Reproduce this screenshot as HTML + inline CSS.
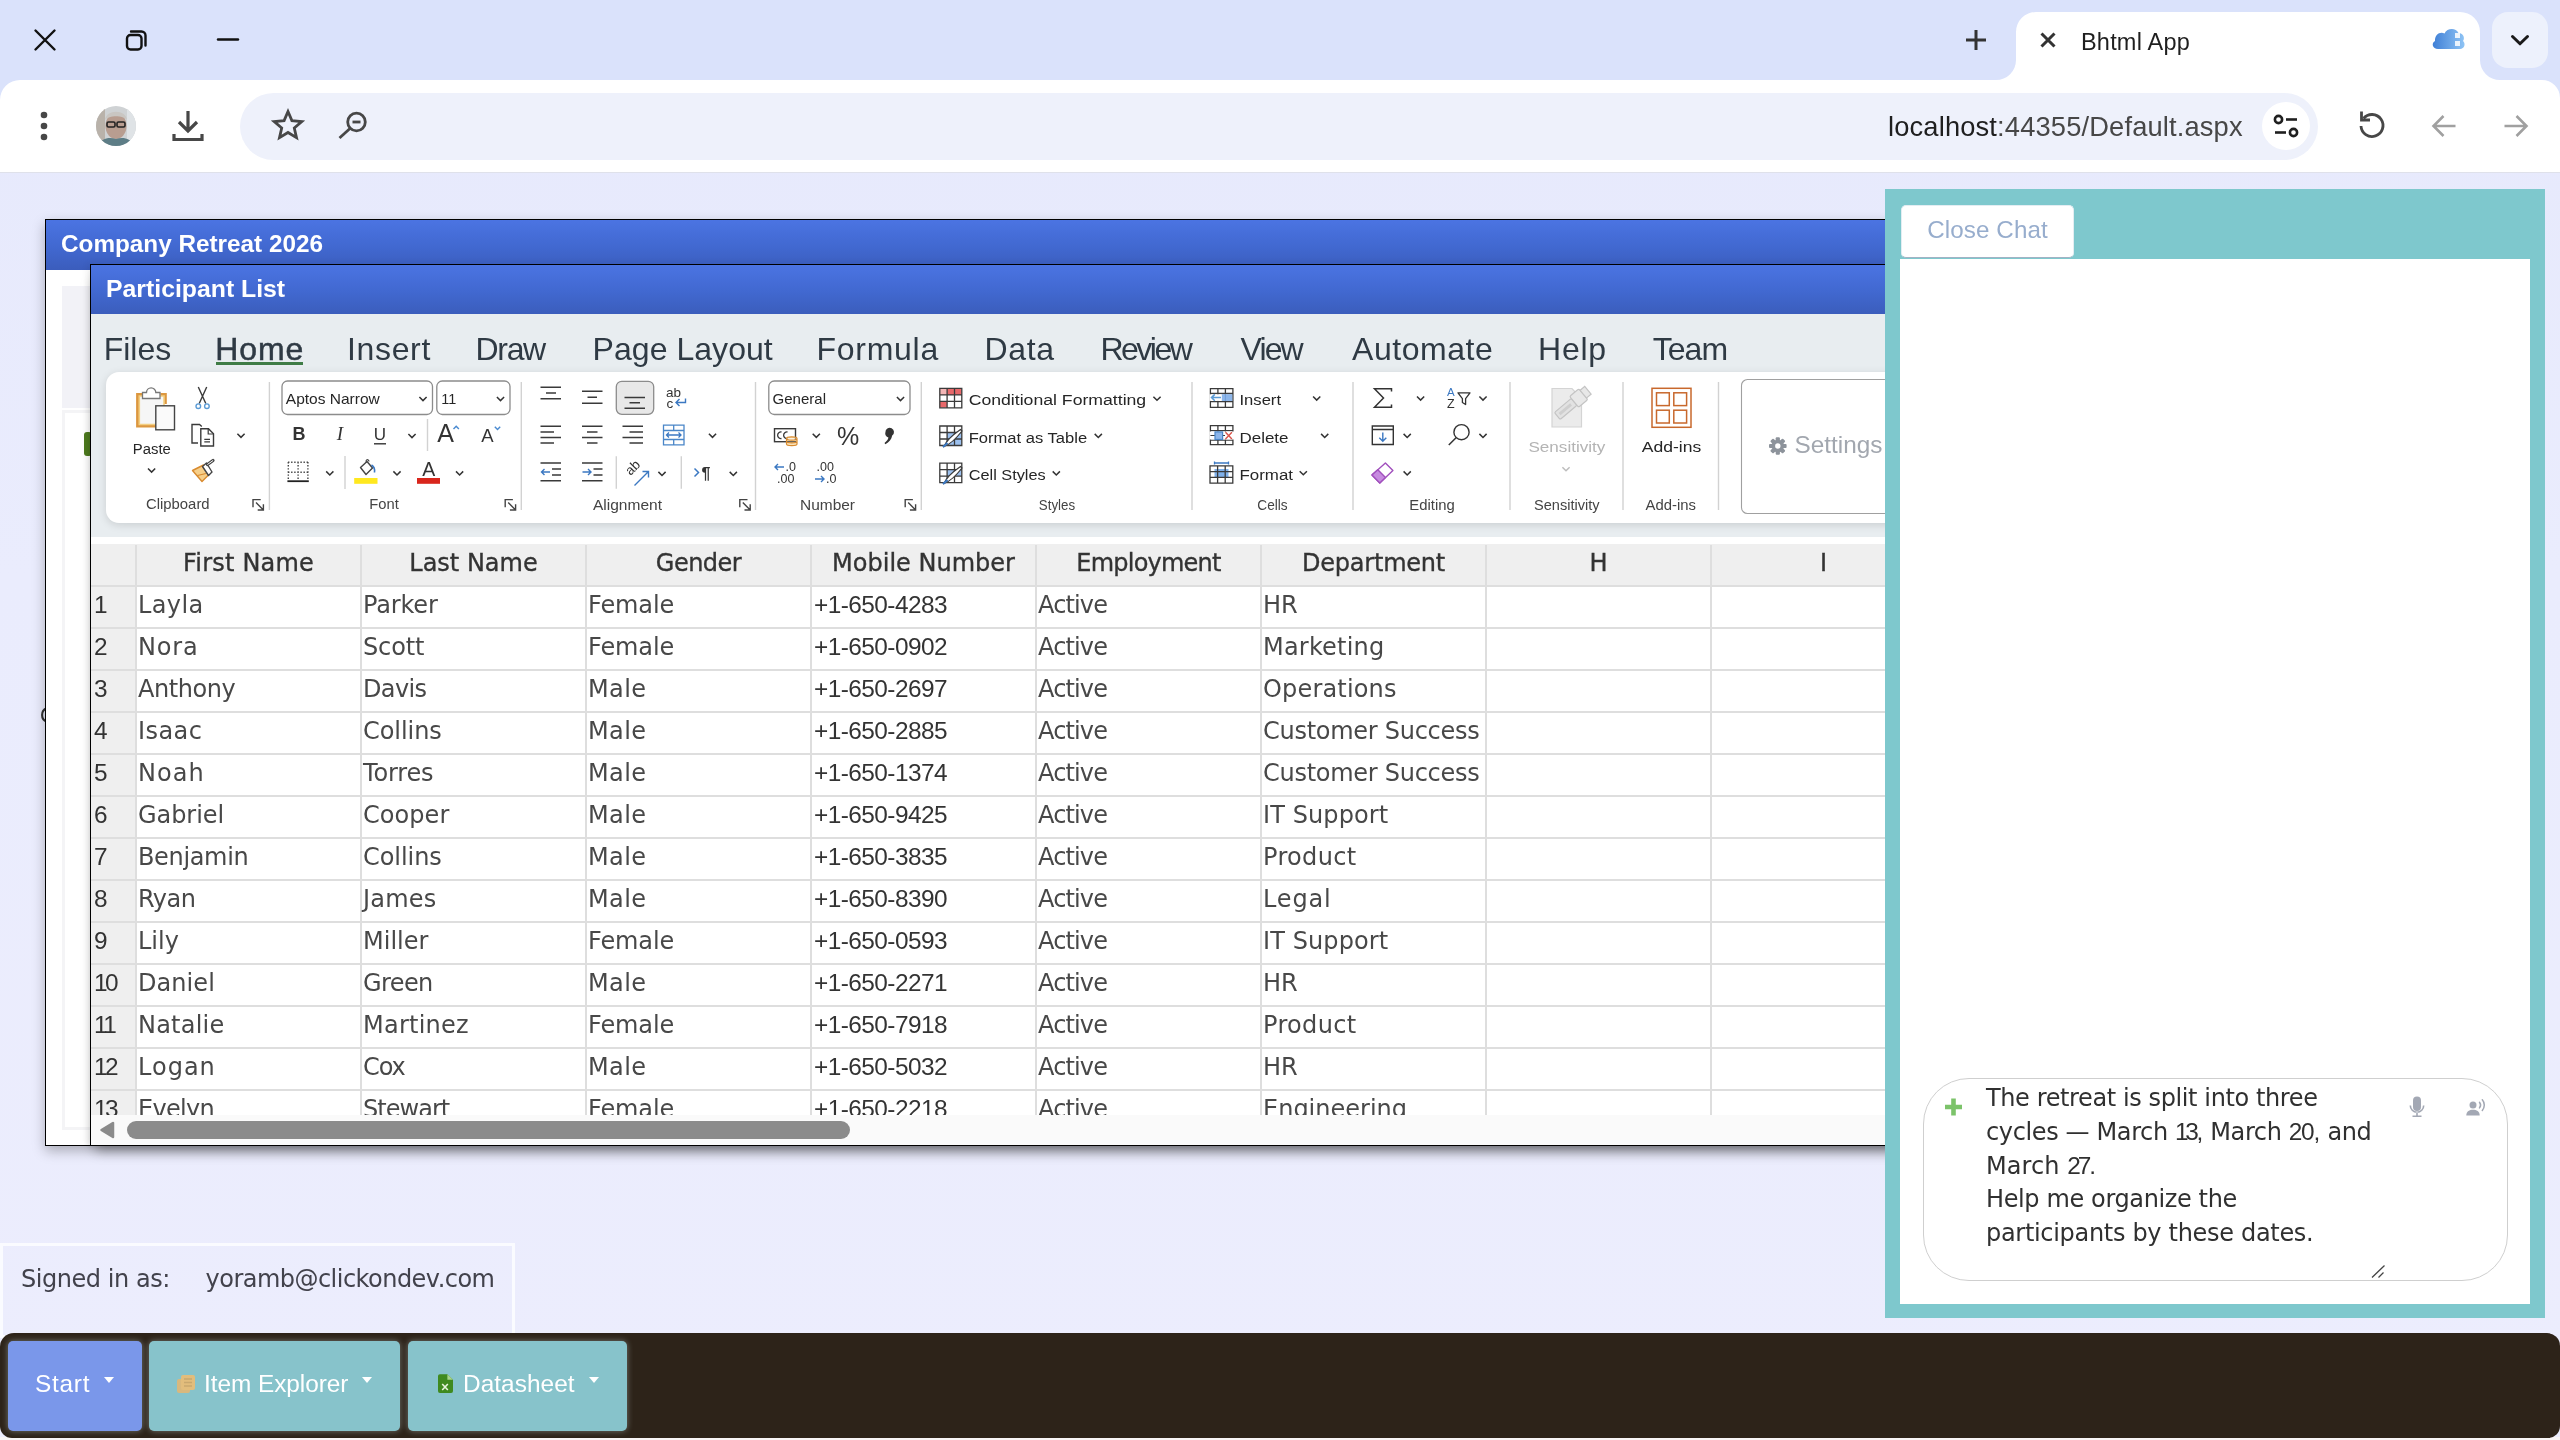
<!DOCTYPE html>
<html lang="en">
<head>
<meta charset="utf-8">
<title>Bhtml App</title>
<style>
*{box-sizing:border-box;margin:0;padding:0}
html,body{width:2560px;height:1440px;overflow:hidden}
body{position:relative;background:#e9ebfc;font-family:"Liberation Sans",sans-serif;color:#222}
.abs{position:absolute}
#win1,#win2,#chat,#signed,#taskbar,#tabtitle,#url{will-change:transform}
.ui{font-family:"Liberation Sans",sans-serif}
svg{position:absolute;overflow:visible}
/* ---------- browser chrome ---------- */
#tabstrip{left:0;top:0;width:2560px;height:173px;background:#dae2fb}
#chromeshape{left:0;top:0;width:2560px;height:173px}
#omni{left:240px;top:93px;width:2078px;height:67px;border-radius:33.5px;background:#eef1fb}
#url{right:317px;top:108px;font-size:27.3px;line-height:38px;color:#1f1f1f;letter-spacing:.15px;white-space:nowrap}
#url span{color:#474747}
#tabtitle{left:2081px;top:25px;font-size:23.5px;line-height:34px;color:#1f1f1f;white-space:nowrap;letter-spacing:.2px}
#tabsearch{left:2492px;top:12px;width:56px;height:56px;border-radius:16px;background:#edf1fc}
#sitechip{left:2262px;top:102px;width:48px;height:48px;border-radius:24px;background:#fff}
#avatar{left:96px;top:106px;width:40px;height:40px;border-radius:20px;background:radial-gradient(circle at 50% 42%,#c9b8ae 0 30%,#9a948f 31% 55%,#cfd3d6 56%);overflow:hidden}
#chromeline{left:0;top:172px;width:2560px;height:1px;background:#dfe1ea}

/* ---------- windows ---------- */
.win{border:1px solid #000;background:#fff;overflow:hidden}
.tbar{left:0;top:0;right:0;color:#fff;font-weight:700;white-space:nowrap;background:linear-gradient(180deg,#4b74e2 0,#4168d0 55%,#3b5dbc 100%)}
#win1{left:45px;top:219px;width:1900px;height:927px;box-shadow:0 5px 12px rgba(0,0,0,.28)}
#win1 .tbar{height:50px;font-size:24.3px;line-height:47px;padding-left:15px}
#win2{left:90px;top:264px;width:1900px;height:882px;box-shadow:0 9px 12px -5px rgba(0,0,0,.4),-2px 0 7px rgba(0,0,0,.08)}
#win2 .tbar{height:49px;font-size:24.8px;line-height:48px;padding-left:15px}
#rbg{left:0;top:49px;right:0;height:223px;background:#e8edf0}
#tabs{left:0;top:49px;height:58px;white-space:nowrap;font-size:32px;line-height:71px;color:#2f3a44}
#tabs span{position:absolute;top:0}
#homeul{left:125px;top:97px;width:87px;height:3px;background:#3f7c46}
#ribbon{left:15px;top:107px;width:1900px;height:151px;background:#fff;border-radius:13px;box-shadow:0 2px 8px rgba(0,0,0,.13)}
/* ---------- grid ---------- */
#grid{left:0;top:272px;width:1900px;height:580px;background:#fff;overflow:hidden;font-family:"DejaVu Sans","Liberation Sans",sans-serif;font-size:24px;color:#484848}
#ghead{left:0;top:7px;width:1900px;height:42px;background:#efefef}
#gside{left:0;top:7px;width:45px;height:572px;background:#efefef}
.hl{position:absolute;left:0;width:1900px;height:2px;background:#dedede}
.vl{position:absolute;top:8px;width:2px;height:572px;background:#dedede}
.c{position:absolute;white-space:nowrap;line-height:42px;height:42px;margin-top:-3px}
.h{position:absolute;white-space:nowrap;line-height:42px;height:42px;width:225px;text-align:center;color:#333;-webkit-text-stroke:.35px #333;margin-top:-3.5px}
.n{font-family:"Liberation Sans",sans-serif;font-size:24.4px;letter-spacing:-.55px;color:#333}
.rn{font-family:"Liberation Sans",sans-serif;font-size:24.4px;letter-spacing:-1.6px;color:#333}
#hscroll{left:0;top:850px;width:1900px;height:30px;background:#fafafa}
#hthumb{left:36px;top:6px;width:723px;height:18px;border-radius:9px;background:#8b8b8b}

/* ---------- chat ---------- */
#chat{left:1885px;top:189px;width:660px;height:1129px;background:#7ec8cd}
#chatbody{left:15px;top:70px;width:630px;height:1045px;background:#fff}
#closechat{left:16px;top:16px;width:173px;height:53px;background:#fff;border-radius:5px;border:1px solid #e3edf2;border-bottom:1px solid #a3b2c4;color:#97adcd;font-size:24.2px;line-height:48px;text-align:center;white-space:nowrap;letter-spacing:.1px}
#chatin{left:38px;top:889px;width:585px;height:203px;border:1px solid #cfcfcf;border-radius:46px;background:#fff}
#chattext{left:101px;top:893px;font-family:"DejaVu Sans","Liberation Sans",sans-serif;font-size:24px;line-height:33.75px;color:#303030;white-space:nowrap}
#chattext div{height:33.75px}
#chattext b{font-weight:400;line-height:1;font-family:"Liberation Sans",sans-serif;font-size:24.4px}
/* ---------- bottom ---------- */
#signed{left:0;top:1243px;width:515px;height:95px;border:3px solid #fafbff;font-family:"DejaVu Sans","Liberation Sans",sans-serif;font-size:24px;line-height:40px;color:#42424c;white-space:nowrap}
#signed span{position:absolute;top:13px}
#taskbar{left:0;top:1333px;width:2560px;height:104.5px;background:#2d2319;border-radius:14px 13px 12px 12px}
.tb{position:absolute;top:8px;height:90px;border-radius:5px;color:#fff;font-size:24.4px;line-height:86px;white-space:nowrap;letter-spacing:.3px;box-shadow:0 0 6px rgba(215,235,235,.42)}
.tb span{position:absolute;top:0}
.tb i{position:absolute;top:35.5px;width:0;height:0;border-left:5.5px solid transparent;border-right:5.5px solid transparent;border-top:6px solid #fff}
/* ---------- page ---------- */
#page{left:0;top:0;width:2560px;height:1440px;background:linear-gradient(180deg,#e6e9fc 0,#eaecfd 40%,#ecedfd 100%);overflow:hidden}
</style>
</head>
<body>
<div class="abs" id="page">
<svg viewBox="0 0 10 20" style="left:38px;top:705px;width:10px;height:20px"><path d="M8.500 3.300A7.300 7.300 0 0 0 8.500 16.700" fill="none" stroke="#333" stroke-width="2.1"/></svg>
<div class="abs win" id="win1"><div class="abs tbar">Company Retreat 2026</div>
<div class="abs" style="left:16px;top:66px;width:40px;height:122px;background:#f2f2f7"></div>
<div class="abs" style="left:16px;top:190px;width:40px;height:720px;border:3px solid #f4f4f6;border-right:0"></div>
<div class="abs" style="left:38px;top:212px;width:8px;height:24px;border-radius:3px;background:#4d7a1e"></div>
</div>
<div class="abs win" id="win2"><div class="abs tbar">Participant List</div>
<div class="abs" id="rbg"></div>
<div class="abs" id="tabs"><span style="left:12.8px;letter-spacing:-0.04px">Files</span><span style="left:124.3px;letter-spacing:0.85px;-webkit-text-stroke:.5px #2f3a44">Home</span><span style="left:256.1px;letter-spacing:0.63px">Insert</span><span style="left:384.5px;letter-spacing:-1.32px">Draw</span><span style="left:501.6px;letter-spacing:0.04px">Page Layout</span><span style="left:725.5px;letter-spacing:0.72px">Formula</span><span style="left:893.4px;letter-spacing:0.67px">Data</span><span style="left:1009.4px;letter-spacing:-2.48px">Review</span><span style="left:1149.6px;letter-spacing:-1.89px">View</span><span style="left:1261.0px;letter-spacing:0.55px">Automate</span><span style="left:1447.1px;letter-spacing:0.69px">Help</span><span style="left:1561.7px;letter-spacing:-0.93px">Team</span></div>
<div class="abs" id="homeul"></div>
<div class="abs" id="ribbon"><!--RB0--><svg viewBox="106 372 1900 151" style="left:0;top:0;width:1900px;height:151px" font-family="Liberation Sans,sans-serif" fill="none"><path d="M142 394.500H137.700V426H156" fill="none" stroke="#dc973f" stroke-width="3.2"/><path d="M160.500 394.500H165.200V404" fill="none" stroke="#dc973f" stroke-width="3.2"/><path d="M139.300 396H164V424.500H139.300Z" fill="#f6f6f6" stroke="#f3cf82" stroke-width="1.6"/><path d="M142.500 398.500V392.500H146.500A4.600 4.600 0 0 1 155.800 392.500H160V398.500Z" fill="#fff" stroke="#777" stroke-width="1.3"/><rect x="155.800" y="405.800" width="18.700" height="24" fill="#fafafa" stroke="#444" stroke-width="1.4"/><text x="132.8" y="453.7" font-size="15.3" fill="#262626" text-anchor="start" textLength="38" lengthAdjust="spacingAndGlyphs">Paste</text><path d="M148.0 468.5L151.6 472.1L155.2 468.5" stroke="#333" stroke-width="1.5" fill="none"/><path d="M198.300 387L205.800 403.500M206.700 387L199.200 403.500" stroke="#3a3a3a" stroke-width="1.4" fill="none"/><circle cx="198.300" cy="406.200" r="2.300" fill="#fff" stroke="#5b9bd5" stroke-width="1.4"/><circle cx="206.900" cy="406.200" r="2.300" fill="#fff" stroke="#5b9bd5" stroke-width="1.4"/><path d="M198 443H192V424.500H199.500L201.800 426.500" fill="none" stroke="#3a3a3a" stroke-width="1.4"/><path d="M200.800 428.800H208.500L213.500 433.800V446H200.800Z" fill="#fff" stroke="#3a3a3a" stroke-width="1.4"/><path d="M208.200 429V434H213.200M204.300 439.300H210M204.300 441.800H210" fill="none" stroke="#3a3a3a" stroke-width="1.2"/><path d="M237.4 433.8L241.0 437.4L244.6 433.8" stroke="#333" stroke-width="1.5" fill="none"/><path d="M192.500 470.500L203.500 465L209 474.500L202 481.500Z" fill="#f6cf8a" stroke="#d88a2e" stroke-width="1.4" stroke-linejoin="round"/><path d="M197.500 475.500L206 473.500" stroke="#d88a2e" stroke-width="1.2"/><path d="M202.500 466.500L206.500 463L212 472L208.500 475.500Z" fill="#fff" stroke="#444" stroke-width="1.4" stroke-linejoin="round"/><path d="M207.500 464.500L213 460.500" stroke="#444" stroke-width="3.200" stroke-linecap="round"/><path d="M207.800 464.300L212.800 460.700" stroke="#fff" stroke-width="1" stroke-linecap="round"/><text x="146" y="509.2" font-size="14.6" fill="#444" text-anchor="start" textLength="63.6" lengthAdjust="spacingAndGlyphs">Clipboard</text><path d="M253.0 507.3V499.6H260.7M256.0 502.6L263.2 509.8M263.4 504.3V510.0H257.7" stroke="#444" stroke-width="1.4" fill="none"/><path d="M269.4 382V510" stroke="#d2d2d2" stroke-width="1.4"/><rect x="282" y="381" width="150.5" height="33.5" rx="5.5" fill="#fff" stroke="#8c8c8c" stroke-width="1.3"/><text x="285.8" y="403.5" font-size="15" fill="#262626" text-anchor="start" textLength="94" lengthAdjust="spacingAndGlyphs">Aptos Narrow</text><path d="M419.4 397.0L423.0 400.6L426.6 397.0" stroke="#333" stroke-width="1.5" fill="none"/><rect x="436.8" y="381" width="73.19999999999999" height="33.5" rx="5.5" fill="#fff" stroke="#8c8c8c" stroke-width="1.3"/><text x="441.3" y="403.5" font-size="15" fill="#262626" text-anchor="start" textLength="15" lengthAdjust="spacingAndGlyphs">11</text><path d="M496.9 397.0L500.5 400.6L504.1 397.0" stroke="#333" stroke-width="1.5" fill="none"/><text x="299" y="440.3" font-size="18" fill="#333" text-anchor="middle" font-weight="700">B</text><text x="340" y="440.3" font-size="19" fill="#333" text-anchor="middle" font-style="italic" font-family="Liberation Serif,serif">I</text><text x="380" y="440" font-size="17" fill="#333" text-anchor="middle">U</text><path d="M374 443.800H386" stroke="#333" stroke-width="1.4"/><path d="M408.4 434.0L412.0 437.6L415.6 434.0" stroke="#333" stroke-width="1.5" fill="none"/><path d="M427.5 419V451" stroke="#d2d2d2" stroke-width="1.4"/><text x="445.5" y="442" font-size="25" fill="#333" text-anchor="middle">A</text><path d="M453.500 429L456.200 426.200L458.900 429" stroke="#4a8ad0" stroke-width="1.4" fill="none"/><text x="487.5" y="442" font-size="18.5" fill="#333" text-anchor="middle">A</text><path d="M494.800 426.800L497.500 429.600L500.200 426.800" stroke="#4a8ad0" stroke-width="1.4" fill="none"/><path d="M288 462.300H308.200M288 472.300H308.200M288.300 462V479.500M298.100 462V479.500M307.900 462V479.500" stroke="#444" stroke-width="1.4" stroke-dasharray="1.4 1.7" fill="none"/><path d="M287.400 481.200H308.800" stroke="#222" stroke-width="1.800"/><path d="M326.2 471.4L329.8 475.0L333.4 471.4" stroke="#333" stroke-width="1.5" fill="none"/><path d="M345 456V489" stroke="#d2d2d2" stroke-width="1.4"/><path d="M360.500 467.500L367 461.500L372.500 468L366 474.500Z" fill="#fff" stroke="#444" stroke-width="1.4" stroke-linejoin="round"/><path d="M366.500 462.500C365 459.500 368.500 458.500 369 461.500" fill="none" stroke="#444" stroke-width="1.200"/><path d="M371.500 465C374 466.500 375 469 374.500 472.500" fill="none" stroke="#3b78c2" stroke-width="1.600"/><rect x="354.200" y="478" width="23.300" height="5.800" fill="#ffe81f"/><path d="M393.4 471.4L397.0 475.0L400.6 471.4" stroke="#333" stroke-width="1.5" fill="none"/><text x="428.7" y="476" font-size="19.5" fill="#333" text-anchor="middle">A</text><rect x="417" y="478" width="23" height="5.800" fill="#d9261c"/><path d="M456.0 471.4L459.6 475.0L463.2 471.4" stroke="#333" stroke-width="1.5" fill="none"/><text x="369.3" y="509.2" font-size="14.6" fill="#444" text-anchor="start" textLength="29.5" lengthAdjust="spacingAndGlyphs">Font</text><path d="M505.2 507.3V499.6H512.9M508.2 502.6L515.4 509.8M515.6 504.3V510.0H509.9" stroke="#444" stroke-width="1.4" fill="none"/><path d="M521.3 382V510" stroke="#d2d2d2" stroke-width="1.4"/><path d="M540.5 387.2H561M546 393H556M540.5 398.8H561" stroke="#3a3a3a" stroke-width="1.5" fill="none"/><path d="M582 391.3H602.5M587.5 397.3H597M582 403.2H602.5" stroke="#3a3a3a" stroke-width="1.5" fill="none"/><rect x="616.300" y="381.300" width="37.400" height="33" rx="5.500" fill="#e8e8e8" stroke="#8c8c8c" stroke-width="1.3"/><path d="M624.5 397.4H645M629.5 402.8H640M624.5 408.2H645" stroke="#3a3a3a" stroke-width="1.5" fill="none"/><text x="666" y="397" font-size="13.5" fill="#333" text-anchor="start">ab</text><text x="666.5" y="407.5" font-size="13.5" fill="#333" text-anchor="start">c</text><path d="M685.500 398.500V402.500H676M679.500 399L676 402.500L679.500 406" stroke="#3b78c2" stroke-width="1.400" fill="none"/><path d="M540.5 426.3H561M540.5 431.9H554M540.5 437.5H561M540.5 443.1H554" stroke="#3a3a3a" stroke-width="1.5" fill="none"/><path d="M582 426.3H602.5M587 431.9H597.5M582 437.5H602.5M587 443.1H597.5" stroke="#3a3a3a" stroke-width="1.5" fill="none"/><path d="M622.5 426.3H643M629.5 431.9H643M622.5 437.5H643M629.5 443.1H643" stroke="#3a3a3a" stroke-width="1.5" fill="none"/><path d="M663.500 425.200H684V444.800H663.500ZM663.500 430.500H684M663.500 439.500H684M673.700 425.200V430.500M673.700 439.500V444.800" fill="#fff" stroke="#4a86c8" stroke-width="1.3"/><path d="M666.500 435H681M669 432.500L666.500 435L669 437.500M678.500 432.500L681 435L678.500 437.500" stroke="#3b78c2" stroke-width="1.300" fill="none"/><path d="M708.9 433.8L712.5 437.4L716.1 433.8" stroke="#333" stroke-width="1.5" fill="none"/><path d="M540.5 463H561M552 469.1H561M552 475H561M540.5 480.7H561" stroke="#3a3a3a" stroke-width="1.5" fill="none"/><path d="M541.500 472H550M544.500 469L541.500 472L544.500 475" stroke="#3b78c2" stroke-width="1.400" fill="none"/><path d="M582 463H602.5M593.5 469.1H602.5M593.5 475H602.5M582 480.7H602.5" stroke="#3a3a3a" stroke-width="1.5" fill="none"/><path d="M582.500 472H591M588 469L591 472L588 475" stroke="#3b78c2" stroke-width="1.400" fill="none"/><path d="M616.3 456.3V488.8" stroke="#d2d2d2" stroke-width="1.4"/><text x="0" y="0" font-size="13.500" fill="#333" transform="translate(630.500 476) rotate(-45)">ab</text><path d="M634.500 485.500L648 472M642.500 471.500H648.500V477.500" stroke="#3b78c2" stroke-width="1.400" fill="none"/><path d="M658.4 471.9L662.0 475.5L665.6 471.9" stroke="#333" stroke-width="1.5" fill="none"/><path d="M681.3 456.3V488.8" stroke="#d2d2d2" stroke-width="1.4"/><path d="M694.500 468.500L698.500 472.500L694.500 476.500" stroke="#3b78c2" stroke-width="1.500" fill="none"/><text x="706" y="479" font-size="16" fill="#333" text-anchor="middle" font-weight="700">¶</text><path d="M729.7 471.9L733.3 475.5L736.9 471.9" stroke="#333" stroke-width="1.5" fill="none"/><text x="593" y="509.5" font-size="14.6" fill="#444" text-anchor="start" textLength="69" lengthAdjust="spacingAndGlyphs">Alignment</text><path d="M739.8 507.3V499.6H747.5M742.8 502.6L750 509.8M750.2 504.3V510.0H744.5" stroke="#444" stroke-width="1.4" fill="none"/><path d="M755.5 382V510" stroke="#d2d2d2" stroke-width="1.4"/><rect x="768.8" y="381" width="141.20000000000005" height="33.5" rx="5.5" fill="#fff" stroke="#8c8c8c" stroke-width="1.3"/><text x="772.5" y="403.5" font-size="15" fill="#262626" text-anchor="start" textLength="53.5" lengthAdjust="spacingAndGlyphs">General</text><path d="M896.9 397.0L900.5 400.6L904.1 397.0" stroke="#333" stroke-width="1.5" fill="none"/><rect x="774.500" y="428.700" width="21" height="13" fill="#fff" stroke="#3a3a3a" stroke-width="1.4"/><path d="M781.500 432a3.300 3.300 0 1 0 0 6.500M787.500 432a3.300 3.300 0 1 0 0 6.500" stroke="#3a3a3a" stroke-width="1.3" fill="none"/><path d="M786.500 438.500c0-2.200 10.500-2.200 10.500 0v5.500c0 2.200-10.500 2.200-10.500 0zM786.500 438.500c0 2.200 10.500 2.200 10.500 0M786.500 441.300c0 2.200 10.500 2.200 10.500 0" fill="#fbe3b8" stroke="#d88a2e" stroke-width="1.200"/><path d="M812.7 433.8L816.3 437.4L819.9 433.8" stroke="#333" stroke-width="1.5" fill="none"/><text x="848.2" y="444.5" font-size="25" fill="#333" text-anchor="middle">%</text><path d="M885.400 432.200a4.300 4.300 0 1 1 6.800 3.400c-.700 3.700-3 6.700-6.800 8.600l-.900-1.300c2.400-1.600 3.600-3.300 3.900-5.300a4.300 4.300 0 0 1-3-5.400z" fill="#333"/><path d="M775 467H784M778 464L775 467L778 470" stroke="#3b78c2" stroke-width="1.400" fill="none"/><text x="785.5" y="471" font-size="12.5" fill="#333" text-anchor="start">.0</text><text x="777" y="483.3" font-size="12.5" fill="#333" text-anchor="start">.00</text><text x="816.5" y="471" font-size="12.5" fill="#333" text-anchor="start">.00</text><path d="M815 479H824M821 476L824 479L821 482" stroke="#3b78c2" stroke-width="1.400" fill="none"/><text x="826" y="483.3" font-size="12.5" fill="#333" text-anchor="start">.0</text><text x="800" y="509.5" font-size="14.6" fill="#444" text-anchor="start" textLength="55" lengthAdjust="spacingAndGlyphs">Number</text><path d="M905.1999999999999 507.3V499.6H912.9M908.1999999999999 502.6L915.4 509.8M915.6 504.3V510.0H909.9" stroke="#444" stroke-width="1.4" fill="none"/><path d="M921.3 382V510" stroke="#d2d2d2" stroke-width="1.4"/><path d="M947 388.500h14.500v6.500h-14.500zM939.800 401h7.300v6.500h-7.300z" fill="#e8686a"/><path d="M939.800 388.500h7.300v6.500h-7.300z" fill="#f3b5b5"/><path d="M939.8 388.3h22v19.5h-22zM939.8 394.8h22M939.8 401.3h22M947.1 388.3v19.5M954.5 388.3v19.5" fill="none" stroke="#3a3a3a" stroke-width="1.300"/><text x="968.7" y="405" font-size="15.3" fill="#262626" text-anchor="start" textLength="177.5" lengthAdjust="spacingAndGlyphs">Conditional Formatting</text><path d="M1153.4 396.7L1157.0 400.3L1160.6 396.7" stroke="#333" stroke-width="1.5" fill="none"/><path d="M947 432.500h14.500v13h-14.500z" fill="#9cc0ee"/><path d="M939.8 426h22v19.5h-22zM939.8 432.5h22M939.8 439.0h22M947.1 426v19.5M954.5 426v19.5" fill="none" stroke="#3a3a3a" stroke-width="1.300"/><path d="M944 446.500C946 441 954 434 960.500 429.500L962 431C957 437.500 951 444 944 446.500Z" fill="#fff" stroke="#3a3a3a" stroke-width="1.200"/><path d="M943 447L947.500 443" stroke="#3b78c2" stroke-width="2.200"/><text x="968.7" y="442.5" font-size="15.3" fill="#262626" text-anchor="start" textLength="118.5" lengthAdjust="spacingAndGlyphs">Format as Table</text><path d="M1094.7 433.9L1098.3 437.5L1101.9 433.9" stroke="#333" stroke-width="1.5" fill="none"/><path d="M947 469.500h14.500v6.500h-14.500z" fill="#9cc0ee"/><path d="M939.8 463.2h22v19.5h-22zM939.8 469.7h22M939.8 476.2h22M947.1 463.2v19.5M954.5 463.2v19.5" fill="none" stroke="#3a3a3a" stroke-width="1.300"/><path d="M944 483.500C946 478 954 471 960.500 466.500L962 468C957 474.500 951 481 944 483.500Z" fill="#fff" stroke="#3a3a3a" stroke-width="1.200"/><path d="M943 484L947.500 480" stroke="#3b78c2" stroke-width="2.200"/><text x="968.7" y="480" font-size="15.3" fill="#262626" text-anchor="start" textLength="77" lengthAdjust="spacingAndGlyphs">Cell Styles</text><path d="M1052.7 471.4L1056.3 475.0L1059.9 471.4" stroke="#333" stroke-width="1.5" fill="none"/><text x="1038.8" y="509.5" font-size="14.6" fill="#444" text-anchor="start" textLength="36.3" lengthAdjust="spacingAndGlyphs">Styles</text><path d="M1192 382V510" stroke="#d2d2d2" stroke-width="1.4"/><path d="M1210.400 388.700h22.500v18.700h-22.500zM1210.400 393.500h22.500M1210.400 401.600h22.500M1217.900 388.700v18.700M1225.400 388.700v18.700" fill="none" stroke="#3a3a3a" stroke-width="1.300"/><rect x="1209.500" y="394.300" width="12.300" height="6.600" fill="#fff"/><rect x="1221.800" y="394.200" width="10.500" height="6.800" fill="#8db6ea"/><path d="M1225.400 394.200v6.800" stroke="#6f9fda" stroke-width="1"/><path d="M1211.500 397.600h9.500M1214.800 394.400l-3.300 3.200l3.300 3.200" stroke="#5b9bd5" stroke-width="1.500" fill="none"/><text x="1239.5" y="405" font-size="15.3" fill="#262626" text-anchor="start" textLength="41.5" lengthAdjust="spacingAndGlyphs">Insert</text><path d="M1313.1 396.5L1316.7 400.1L1320.3 396.5" stroke="#333" stroke-width="1.5" fill="none"/><path d="M1210.400 425.700h22.500v19h-22.500zM1210.400 430.700h22.500M1210.400 440.200h22.500M1217.900 425.700v19M1225.400 425.700v19" fill="none" stroke="#3a3a3a" stroke-width="1.300"/><rect x="1209.500" y="431.500" width="24.500" height="8" fill="#fff"/><path d="M1210.400 435.500h5M1222.500 435.500h2.500" stroke="#3a3a3a" stroke-width="1.200"/><rect x="1215" y="431.900" width="7.600" height="7.600" fill="#8db6ea" stroke="#4a86c8" stroke-width="1.200"/><path d="M1225.500 432.300l6.400 6.800M1231.900 432.300l-6.400 6.800" stroke="#d9534a" stroke-width="1.400"/><text x="1239.5" y="442.5" font-size="15.3" fill="#262626" text-anchor="start" textLength="49" lengthAdjust="spacingAndGlyphs">Delete</text><path d="M1321.1 433.9L1324.7 437.5L1328.3 433.9" stroke="#333" stroke-width="1.5" fill="none"/><path d="M1214.500 469h14v8.500h-14z" fill="#7fb0ea"/><path d="M1210 465.8h22.8v17.4h-22.8zM1210 471.6h22.8M1210 477.4h22.8M1217.6 465.8v17.4M1225.2 465.8v17.4" fill="none" stroke="#3a3a3a" stroke-width="1.300"/><path d="M1214.500 463h14M1214.500 461.500v3M1228.500 461.500v3" stroke="#3b78c2" stroke-width="1.300" fill="none"/><text x="1239.5" y="480.2" font-size="15.3" fill="#262626" text-anchor="start" textLength="53.5" lengthAdjust="spacingAndGlyphs">Format</text><path d="M1299.7 471.2L1303.3 474.8L1306.9 471.2" stroke="#333" stroke-width="1.5" fill="none"/><text x="1257.3" y="509.5" font-size="14.6" fill="#444" text-anchor="start" textLength="30.3" lengthAdjust="spacingAndGlyphs">Cells</text><path d="M1353 382V510" stroke="#d2d2d2" stroke-width="1.4"/><path d="M1391.500 391.500V388.800H1374.500L1383.500 398L1374.500 407.200H1391.500V404.500" fill="none" stroke="#333" stroke-width="1.500"/><path d="M1417.0 396.5L1420.6 400.1L1424.2 396.5" stroke="#333" stroke-width="1.5" fill="none"/><text x="1447" y="395.5" font-size="11.5" fill="#3b78c2" text-anchor="start">A</text><text x="1447" y="408" font-size="12.5" fill="#333" text-anchor="start">Z</text><path d="M1458 392.800H1470L1465.600 398.600V404.500L1462.400 402.500V398.600Z" fill="#fff" stroke="#333" stroke-width="1.300" stroke-linejoin="round"/><path d="M1479.4 396.5L1483.0 400.1L1486.6 396.5" stroke="#333" stroke-width="1.5" fill="none"/><path d="M1372.300 426h21v18.500h-21zM1372.300 429.500h21" fill="#fff" stroke="#333" stroke-width="1.400"/><path d="M1382.800 432.500v8.500M1379.300 437.800l3.500 3.500l3.500-3.500" stroke="#3b78c2" stroke-width="1.400" fill="none"/><path d="M1403.6 433.9L1407.2 437.5L1410.8 433.9" stroke="#333" stroke-width="1.5" fill="none"/><circle cx="1461.500" cy="432.200" r="7.600" fill="none" stroke="#333" stroke-width="1.400"/><path d="M1456 437.800L1448.800 445" stroke="#333" stroke-width="1.500"/><path d="M1479.4 433.9L1483.0 437.5L1486.6 433.9" stroke="#333" stroke-width="1.5" fill="none"/><path d="M1372 474.900L1385.400 463L1392.900 470.500L1379.800 483Z" fill="#fff" stroke="#a150bd" stroke-width="1.400" stroke-linejoin="round"/><path d="M1372 474.900L1377.800 469.800L1385.500 477.600L1379.800 483Z" fill="#c78be0" stroke="#a150bd" stroke-width="1.400" stroke-linejoin="round"/><path d="M1403.6 471.4L1407.2 475.0L1410.8 471.4" stroke="#333" stroke-width="1.5" fill="none"/><text x="1409.3" y="509.5" font-size="14.6" fill="#444" text-anchor="start" textLength="45.4" lengthAdjust="spacingAndGlyphs">Editing</text><path d="M1510 382V510" stroke="#d2d2d2" stroke-width="1.4"/><path d="M1552 388.500H1572L1581.500 399V427H1552Z" fill="#ebebeb" stroke="#d4d4d4" stroke-width="1.200"/><g transform="translate(1568 407) rotate(-40)"><rect x="-14" y="-4.500" width="22" height="9" rx="1.500" fill="#e2e2e2" stroke="#c4c4c4" stroke-width="1.200"/><rect x="-11" y="-1.500" width="15" height="3" fill="#cfcfcf"/><rect x="8" y="-7" width="12" height="14" rx="1.500" fill="#e8e8e8" stroke="#c4c4c4" stroke-width="1.200"/><rect x="20" y="-5" width="6" height="10" fill="#e8e8e8" stroke="#c4c4c4" stroke-width="1.200"/></g><text x="1528.4" y="452" font-size="15.3" fill="#b4b4b4" text-anchor="start" textLength="77" lengthAdjust="spacingAndGlyphs">Sensitivity</text><path d="M1562.4 467.2L1566.0 470.8L1569.6 467.2" stroke="#bdbdbd" stroke-width="1.5" fill="none"/><text x="1534" y="509.5" font-size="14.6" fill="#444" text-anchor="start" textLength="65.6" lengthAdjust="spacingAndGlyphs">Sensitivity</text><path d="M1623 382V510" stroke="#d2d2d2" stroke-width="1.4"/><rect x="1652" y="388.300" width="39" height="39" fill="none" stroke="#c8682c" stroke-width="1.500"/><rect x="1656.5" y="392.8" width="12.800" height="12.800" fill="none" stroke="#c8682c" stroke-width="1.500"/><rect x="1673.8" y="392.8" width="12.800" height="12.800" fill="none" stroke="#c8682c" stroke-width="1.500"/><rect x="1656.5" y="410.2" width="12.800" height="12.800" fill="none" stroke="#c8682c" stroke-width="1.500"/><rect x="1673.8" y="410.2" width="12.800" height="12.800" fill="none" stroke="#c8682c" stroke-width="1.500"/><text x="1641.8" y="452" font-size="15.3" fill="#262626" text-anchor="start" textLength="59.4" lengthAdjust="spacingAndGlyphs">Add-ins</text><text x="1645.6" y="509.5" font-size="14.6" fill="#444" text-anchor="start" textLength="50.4" lengthAdjust="spacingAndGlyphs">Add-ins</text><path d="M1718.5 382V510" stroke="#d2d2d2" stroke-width="1.4"/><rect x="1741.500" y="379.500" width="300" height="134" rx="6" fill="#fff" stroke="#a0a0a0" stroke-width="1.100"/><rect x="-2.100" y="-8.800" width="4.200" height="4.600" rx="1" fill="#8d939b" transform="translate(1777.8 446) rotate(0)"/><rect x="-2.100" y="-8.800" width="4.200" height="4.600" rx="1" fill="#8d939b" transform="translate(1777.8 446) rotate(45)"/><rect x="-2.100" y="-8.800" width="4.200" height="4.600" rx="1" fill="#8d939b" transform="translate(1777.8 446) rotate(90)"/><rect x="-2.100" y="-8.800" width="4.200" height="4.600" rx="1" fill="#8d939b" transform="translate(1777.8 446) rotate(135)"/><rect x="-2.100" y="-8.800" width="4.200" height="4.600" rx="1" fill="#8d939b" transform="translate(1777.8 446) rotate(180)"/><rect x="-2.100" y="-8.800" width="4.200" height="4.600" rx="1" fill="#8d939b" transform="translate(1777.8 446) rotate(225)"/><rect x="-2.100" y="-8.800" width="4.200" height="4.600" rx="1" fill="#8d939b" transform="translate(1777.8 446) rotate(270)"/><rect x="-2.100" y="-8.800" width="4.200" height="4.600" rx="1" fill="#8d939b" transform="translate(1777.8 446) rotate(315)"/><circle cx="1777.800" cy="446" r="6.200" fill="#8d939b"/><circle cx="1777.800" cy="446" r="2.700" fill="#fff"/><text x="1794.5" y="452.8" font-size="24.3" fill="#a2a7af" text-anchor="start" textLength="88" lengthAdjust="spacingAndGlyphs">Settings</text></svg><!--RB1--></div>
<div class="abs" id="grid"><div class="abs" id="ghead"></div><div class="abs" id="gside"></div><div class="hl" style="top:48px"></div><div class="hl" style="top:90px"></div><div class="hl" style="top:132px"></div><div class="hl" style="top:174px"></div><div class="hl" style="top:216px"></div><div class="hl" style="top:258px"></div><div class="hl" style="top:300px"></div><div class="hl" style="top:342px"></div><div class="hl" style="top:384px"></div><div class="hl" style="top:426px"></div><div class="hl" style="top:468px"></div><div class="hl" style="top:510px"></div><div class="hl" style="top:552px"></div><div class="hl" style="top:594px"></div><div class="hl" style="top:636px"></div><div class="vl" style="left:44px"></div><div class="vl" style="left:269px"></div><div class="vl" style="left:494px"></div><div class="vl" style="left:719px"></div><div class="vl" style="left:944px"></div><div class="vl" style="left:1169px"></div><div class="vl" style="left:1394px"></div><div class="vl" style="left:1619px"></div><div class="vl" style="left:1844px"></div><div class="h" style="left:45px;top:8px;letter-spacing:0.2px;padding-left:0.2px">First Name</div><div class="h" style="left:270px;top:8px">Last Name</div><div class="h" style="left:495px;top:8px;letter-spacing:-0.51px;padding-left:-0.51px">Gender</div><div class="h" style="left:720px;top:8px">Mobile Number</div><div class="h" style="left:945px;top:8px;letter-spacing:-0.77px;padding-left:-0.77px">Employment</div><div class="h" style="left:1170px;top:8px;letter-spacing:-0.22px;padding-left:-0.22px">Department</div><div class="h" style="left:1395px;top:8px">H</div><div class="h" style="left:1620px;top:8px">I</div><div class="h" style="left:1845px;top:8px">J</div><div class="c rn" style="left:3px;top:50px">1</div><div class="c" style="left:47px;top:50px;letter-spacing:0.39px">Layla</div><div class="c" style="left:272px;top:50px;letter-spacing:-0.18px">Parker</div><div class="c" style="left:497px;top:50px;letter-spacing:-0.1px">Female</div><div class="c n" style="left:723px;top:50px">+1-650-4283</div><div class="c" style="left:947px;top:50px;letter-spacing:-0.85px">Active</div><div class="c" style="left:1172px;top:50px">HR</div><div class="c rn" style="left:3px;top:92px">2</div><div class="c" style="left:47px;top:92px;letter-spacing:0.8px">Nora</div><div class="c" style="left:272px;top:92px;letter-spacing:-0.13px">Scott</div><div class="c" style="left:497px;top:92px;letter-spacing:-0.1px">Female</div><div class="c n" style="left:723px;top:92px">+1-650-0902</div><div class="c" style="left:947px;top:92px;letter-spacing:-0.85px">Active</div><div class="c" style="left:1172px;top:92px;letter-spacing:0.2px">Marketing</div><div class="c rn" style="left:3px;top:134px">3</div><div class="c" style="left:47px;top:134px;letter-spacing:-0.44px">Anthony</div><div class="c" style="left:272px;top:134px;letter-spacing:-0.64px">Davis</div><div class="c" style="left:497px;top:134px;letter-spacing:0.37px">Male</div><div class="c n" style="left:723px;top:134px">+1-650-2697</div><div class="c" style="left:947px;top:134px;letter-spacing:-0.85px">Active</div><div class="c" style="left:1172px;top:134px;letter-spacing:0.17px">Operations</div><div class="c rn" style="left:3px;top:176px">4</div><div class="c" style="left:47px;top:176px;letter-spacing:0.43px">Isaac</div><div class="c" style="left:272px;top:176px;letter-spacing:-0.06px">Collins</div><div class="c" style="left:497px;top:176px;letter-spacing:0.37px">Male</div><div class="c n" style="left:723px;top:176px">+1-650-2885</div><div class="c" style="left:947px;top:176px;letter-spacing:-0.85px">Active</div><div class="c" style="left:1172px;top:176px;letter-spacing:-0.27px">Customer Success</div><div class="c rn" style="left:3px;top:218px">5</div><div class="c" style="left:47px;top:218px;letter-spacing:1.09px">Noah</div><div class="c" style="left:272px;top:218px;letter-spacing:-0.16px">Torres</div><div class="c" style="left:497px;top:218px;letter-spacing:0.37px">Male</div><div class="c n" style="left:723px;top:218px">+1-650-1374</div><div class="c" style="left:947px;top:218px;letter-spacing:-0.85px">Active</div><div class="c" style="left:1172px;top:218px;letter-spacing:-0.27px">Customer Success</div><div class="c rn" style="left:3px;top:260px">6</div><div class="c" style="left:47px;top:260px;letter-spacing:-0.06px">Gabriel</div><div class="c" style="left:272px;top:260px;letter-spacing:0.06px">Cooper</div><div class="c" style="left:497px;top:260px;letter-spacing:0.37px">Male</div><div class="c n" style="left:723px;top:260px">+1-650-9425</div><div class="c" style="left:947px;top:260px;letter-spacing:-0.85px">Active</div><div class="c" style="left:1172px;top:260px;letter-spacing:0.11px">IT Support</div><div class="c rn" style="left:3px;top:302px">7</div><div class="c" style="left:47px;top:302px;letter-spacing:-0.34px">Benjamin</div><div class="c" style="left:272px;top:302px;letter-spacing:-0.06px">Collins</div><div class="c" style="left:497px;top:302px;letter-spacing:0.37px">Male</div><div class="c n" style="left:723px;top:302px">+1-650-3835</div><div class="c" style="left:947px;top:302px;letter-spacing:-0.85px">Active</div><div class="c" style="left:1172px;top:302px;letter-spacing:0.35px">Product</div><div class="c rn" style="left:3px;top:344px">8</div><div class="c" style="left:47px;top:344px;letter-spacing:-0.49px">Ryan</div><div class="c" style="left:272px;top:344px;letter-spacing:0.19px">James</div><div class="c" style="left:497px;top:344px;letter-spacing:0.37px">Male</div><div class="c n" style="left:723px;top:344px">+1-650-8390</div><div class="c" style="left:947px;top:344px;letter-spacing:-0.85px">Active</div><div class="c" style="left:1172px;top:344px;letter-spacing:0.84px">Legal</div><div class="c rn" style="left:3px;top:386px">9</div><div class="c" style="left:47px;top:386px">Lily</div><div class="c" style="left:272px;top:386px">Miller</div><div class="c" style="left:497px;top:386px;letter-spacing:-0.1px">Female</div><div class="c n" style="left:723px;top:386px">+1-650-0593</div><div class="c" style="left:947px;top:386px;letter-spacing:-0.85px">Active</div><div class="c" style="left:1172px;top:386px;letter-spacing:0.11px">IT Support</div><div class="c rn" style="left:3px;top:428px;letter-spacing:-2.6px">10</div><div class="c" style="left:47px;top:428px;letter-spacing:0.07px">Daniel</div><div class="c" style="left:272px;top:428px;letter-spacing:-0.59px">Green</div><div class="c" style="left:497px;top:428px;letter-spacing:0.37px">Male</div><div class="c n" style="left:723px;top:428px">+1-650-2271</div><div class="c" style="left:947px;top:428px;letter-spacing:-0.85px">Active</div><div class="c" style="left:1172px;top:428px">HR</div><div class="c rn" style="left:3px;top:470px;letter-spacing:-2.6px">11</div><div class="c" style="left:47px;top:470px;letter-spacing:0.23px">Natalie</div><div class="c" style="left:272px;top:470px;letter-spacing:0.24px">Martinez</div><div class="c" style="left:497px;top:470px;letter-spacing:-0.1px">Female</div><div class="c n" style="left:723px;top:470px">+1-650-7918</div><div class="c" style="left:947px;top:470px;letter-spacing:-0.85px">Active</div><div class="c" style="left:1172px;top:470px;letter-spacing:0.35px">Product</div><div class="c rn" style="left:3px;top:512px;letter-spacing:-2.6px">12</div><div class="c" style="left:47px;top:512px;letter-spacing:1.01px">Logan</div><div class="c" style="left:272px;top:512px;letter-spacing:-1.05px">Cox</div><div class="c" style="left:497px;top:512px;letter-spacing:0.37px">Male</div><div class="c n" style="left:723px;top:512px">+1-650-5032</div><div class="c" style="left:947px;top:512px;letter-spacing:-0.85px">Active</div><div class="c" style="left:1172px;top:512px">HR</div><div class="c rn" style="left:3px;top:554px;letter-spacing:-2.6px">13</div><div class="c" style="left:47px;top:554px;letter-spacing:-0.68px">Evelyn</div><div class="c" style="left:272px;top:554px;letter-spacing:-0.97px">Stewart</div><div class="c" style="left:497px;top:554px;letter-spacing:-0.1px">Female</div><div class="c n" style="left:723px;top:554px">+1-650-2218</div><div class="c" style="left:947px;top:554px;letter-spacing:-0.85px">Active</div><div class="c" style="left:1172px;top:554px">Engineering</div></div>
<div class="abs" id="hscroll"><svg viewBox="0 0 30 30" style="left:4px;top:0;width:30px;height:30px"><path d="M6.500 15L18 8V22Z" fill="#8b8b8b" stroke="#8b8b8b" stroke-width="2.500" stroke-linejoin="round"/></svg><div class="abs" id="hthumb"></div></div>
</div>
<div class="abs" id="chat"><div class="abs" id="chatbody"></div><div class="abs" id="closechat">Close Chat</div>
<div class="abs" id="chatin"></div>
<div class="abs" id="chattext"><div style="letter-spacing:-0.39px">The retreat is split into three</div><div style="letter-spacing:-0.37px">cycles — March <b style="letter-spacing:-3.4px">1</b><b style="letter-spacing:-2.3px;margin-right:2px">3,</b> March <b style="letter-spacing:-1.26px;margin-right:1.26px">20,</b> and</div><div style="letter-spacing:0.08px">March <b style="letter-spacing:-3px">2</b><b style="letter-spacing:-2.2px;margin-right:2.2px">7.</b></div><div style="letter-spacing:-0.38px">Help me organize the</div><div style="letter-spacing:-0.31px">participants by these dates.</div></div>
<svg viewBox="0 0 660 1129" style="left:0;top:0;width:660px;height:1129px" fill="none">
<path d="M60 918H77M68.5 909.5V926.5" stroke="#7cc36a" stroke-width="4.6"/>
<g fill="#a3a8b4"><rect x="528" y="907.5" width="8" height="14.5" rx="4"/><path d="M524.5 916.5a7.5 7.5 0 0 0 15 0h-1.6a5.9 5.9 0 0 1-11.8 0zM531.2 923.5h1.6v3.5h-1.6zM527.5 926.5h9v1.5h-9z"/>
<circle cx="588" cy="916" r="3.5"/><path d="M581.3 926.5c0-4.3 3.3-5.700 6.700-5.700s6.700 1.400 6.700 5.700z"/></g>
<g stroke="#a3a8b4" stroke-width="1.5" stroke-linecap="round"><path d="M594.5 913.300a4.500 4.500 0 0 1 0 5.600"/><path d="M597.300 910.800a8 8 0 0 1 0 10.600"/></g>
<path d="M487 1088.5L499.5 1076.500M493.500 1088.5L498.500 1083.500" stroke="#444" stroke-width="1.3"/>
</svg></div>
<div class="abs" id="signed"><span style="left:17.9px;letter-spacing:-0.45px">Signed in as:</span><span style="left:202.6px;letter-spacing:-0.53px">yoramb@clickondev.com</span></div>
<div class="abs" style="left:0;top:1437px;width:2560px;height:3px;background:#f8f5f6"></div>
<div class="abs" id="taskbar">
<div class="tb" style="left:8px;width:134px;background:#7a97ea"><span style="left:27px;letter-spacing:.75px">Start</span><i style="left:96px"></i></div>
<div class="tb" style="left:149px;width:251px;background:#87c3cb"><span style="left:55px;letter-spacing:-.05px">Item Explorer</span><i style="left:213px"></i>
<svg viewBox="0 0 20 20" style="left:27px;top:33px;width:20px;height:20px"><rect x="1" y="5" width="13" height="14" rx="2" fill="#d8b87e"/><rect x="5" y="1" width="14" height="15" rx="2" fill="#e2bd7c"/><path d="M8 5h8M8 8.500h8M8 12h8" stroke="#c9a86e" stroke-width="1.4"/></svg></div>
<div class="tb" style="left:408px;width:219px;background:#87c3cb"><span style="left:55px;letter-spacing:.05px">Datasheet</span><i style="left:181px"></i>
<svg viewBox="0 0 16 20" style="left:30px;top:33px;width:15px;height:19px"><path d="M2 0h8l6 6v12a2 2 0 0 1-2 2H2a2 2 0 0 1-2-2V2a2 2 0 0 1 2-2z" fill="#3f8a1f"/><path d="M10 0v6h6z" fill="#a8d48c"/><path d="M4.500 10.500l6 6.500M10.500 10.500l-6 6.500" stroke="#e6f3dc" stroke-width="1.7"/></svg></div>
</div>
<!--PAGE3-->
</div>
<div class="abs" id="tabstrip"></div>
<svg id="chromeshape" viewBox="0 0 2560 173"><path fill="#fff" d="M0 173V100A20 20 0 0 1 20 80H1996A20 20 0 0 0 2016 60V32A20 20 0 0 1 2036 12H2460A20 20 0 0 1 2480 32V60A20 20 0 0 0 2500 80H2542A18 18 0 0 1 2560 98V173Z"/></svg>
<div class="abs" id="chromeline"></div>
<div class="abs" id="tabsearch"></div>
<div class="abs" id="omni"></div>
<div class="abs" id="sitechip"></div>
<div class="abs ui" id="tabtitle">Bhtml App</div>
<div class="abs ui" id="url">localhost<span>:44355/Default.aspx</span></div>
<svg id="chromeicons" viewBox="0 0 2560 173" style="left:0;top:0;width:2560px;height:173px" fill="none" stroke-linecap="round" stroke-linejoin="round">
<g stroke="#111" stroke-width="2.4">
<path d="M35.5 30.5L54.5 49.5M54.5 30.5L35.5 49.5"/>
<rect x="127" y="35" width="14.5" height="14.5" rx="3.5"/>
<path d="M131 31.5H141.5A4 4 0 0 1 145.5 35.5V45.5"/>
<path d="M218 39.5H238"/>
</g>
<g fill="#474747" stroke="none"><circle cx="44" cy="115" r="3.3"/><circle cx="44" cy="126" r="3.3"/><circle cx="44" cy="137" r="3.3"/></g>
<g stroke="#474747" stroke-width="3.2">
<path d="M188 111V130M179 122L188 131L197 122" stroke-linecap="butt" stroke-linejoin="miter"/>
<path d="M174 134V139.5H202V134" stroke-linecap="butt" stroke-linejoin="miter"/>
</g>
<path stroke="#474747" stroke-width="2.8" stroke-linejoin="miter" d="M288 111.5L291.9 120.6L301.8 121.5L294.3 128L296.5 137.6L288 132.5L279.5 137.6L281.7 128L274.2 121.5L284.1 120.6Z"/>
<g stroke="#474747" stroke-width="2.8"><circle cx="356.5" cy="122" r="8.8"/><path d="M350 128.5L339.5 138" stroke-linecap="butt"/><path d="M352.5 122H360.5" stroke-linecap="butt"/></g>
<g stroke="#333" stroke-width="3" stroke-linecap="butt"><path d="M1966 40H1986M1976 30V50"/><path d="M2041.5 33.5L2054.5 46.5M2054.5 33.5L2041.5 46.5"/><path d="M2512.500 36.500L2520 43.800L2527.500 36.500" stroke="#1a1a1a" stroke-linejoin="round" stroke-linecap="round"/></g>
<defs><linearGradient id="cl" x1="0" y1="0" x2="1" y2="0"><stop offset="0" stop-color="#3f7fd6"/><stop offset="1" stop-color="#8fc4f5"/></linearGradient></defs>
<path fill="url(#cl)" stroke="none" d="M2438 49C2432.5 49 2431 43 2435 41C2434.5 35 2440 31 2444.5 33.5C2447 28 2456 27.5 2458.5 33C2464 33 2465 39 2463 41C2466 43.5 2464.5 49 2460 49Z"/>
<g fill="#fff" stroke="none" opacity=".85"><rect x="2455" y="33" width="5" height="5"/><rect x="2455" y="41" width="5" height="5"/></g>
<g stroke="#1f1f1f" stroke-width="2.6" stroke-linecap="butt"><circle cx="2278.5" cy="119.5" r="3.6"/><path d="M2286 119.5H2297"/><circle cx="2293.5" cy="132.5" r="3.6"/><path d="M2275 132.5H2286"/></g>
<g stroke="#474747" stroke-width="2.8" stroke-linecap="butt"><path d="M2363.5 118.5A11 11 0 1 1 2361 126"/><path d="M2361.5 111.5V120H2370" stroke-linejoin="miter"/></g>
<g stroke="#a0a0a0" stroke-width="2.6" stroke-linecap="butt" stroke-linejoin="miter"><path d="M2455.5 126H2434M2443.5 116L2433.5 126L2443.5 136"/><path d="M2504.5 126H2526M2516.5 116L2526.5 126L2516.5 136"/></g>
</svg>
<svg viewBox="0 0 40 40" style="left:96px;top:106px;width:40px;height:40px"><defs><clipPath id="avc"><circle cx="20" cy="20" r="20"/></clipPath></defs><g clip-path="url(#avc)"><rect width="40" height="40" fill="#cfd2d4"/><rect x="0" y="0" width="9" height="40" fill="#b9b2aa"/><rect x="31" y="0" width="9" height="40" fill="#dfe3e6"/><ellipse cx="20" cy="20" rx="10.5" ry="13" fill="#b89d90"/><path d="M9 14C10 3 30 3 31 14C27 9 13 9 9 14Z" fill="#c9c6c2"/><rect x="11" y="16" width="8" height="5" rx="1.5" fill="none" stroke="#222" stroke-width="1.6"/><rect x="21" y="16" width="8" height="5" rx="1.5" fill="none" stroke="#222" stroke-width="1.6"/><path d="M3 40C5 32 13 31 20 33C27 31 35 32 37 40Z" fill="#5d7d86"/></g></svg>
</body>
</html>
